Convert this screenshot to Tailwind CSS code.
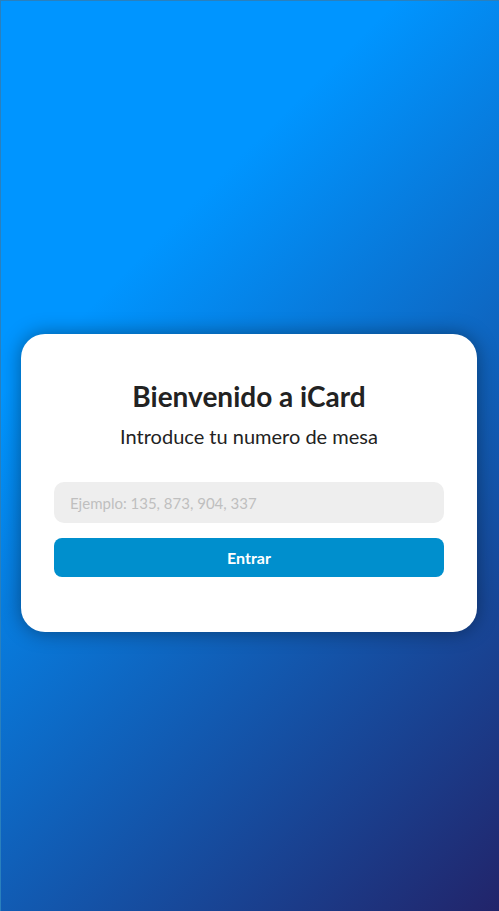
<!DOCTYPE html>
<html lang="es">
<head>
<meta charset="utf-8">
<meta name="viewport" content="width=device-width, initial-scale=1">
<title>iCard</title>
<script src="https://cdn.jsdelivr.net/npm/@tailwindcss/browser@4"></script>
</head>
<body class="font-['Lato',sans-serif] text-[#222]">
<main class="flex min-h-screen items-center justify-center border-t border-l border-[#2a80bd] bg-linear-[135deg,#0095ff_0%,#0095ff_28%,#22246a_100%] pt-[54px] pr-[22px] pl-5">
<section class="w-full rounded-3xl bg-white px-[33px] pt-11 pb-[55px] text-center shadow-[0_0_20px_rgba(0,0,0,0.4)]">
<h1 class="text-[28px] leading-9 font-bold">Bienvenido a iCard</h1>
<p class="mt-1.5 text-xl leading-8">Introduce tu numero de mesa</p>
<form class="mt-[30px] flex flex-col gap-[15px]">
<input type="text" aria-label="Número de mesa" placeholder="Ejemplo: 135, 873, 904, 337" class="h-[41px] w-full rounded-[10px] bg-[#eee] px-4 text-[15px] outline-none placeholder:text-[#bfbfbf]">
<button type="button" class="h-[39px] w-full rounded-lg bg-[#008fcd] text-base font-bold text-white">Entrar</button>
</form>
</section>
</main>
</body>
</html>
